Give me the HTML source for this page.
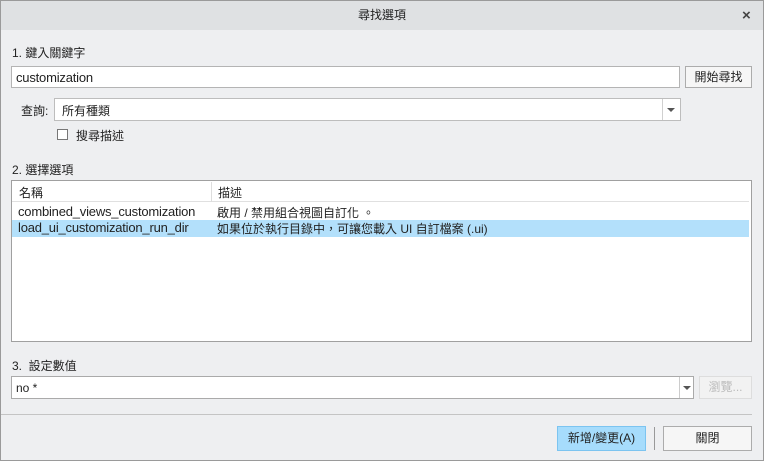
<!DOCTYPE html>
<html><head><meta charset="utf-8"><style>
*{box-sizing:border-box;margin:0;padding:0}
body{width:764px;height:461px;overflow:hidden;background:#eeeff1;font-family:"Liberation Sans","Noto Sans CJK TC",sans-serif;font-size:12px;color:#222;position:relative}
.a{position:absolute}
.win{left:0;top:0;width:764px;height:461px;border:1px solid #9a9a9a}
.title{left:1px;top:1px;width:762px;height:29px;background:#dfe1e3;text-align:center;line-height:29px;font-size:12px}
.inp{background:#fff;border:1px solid #b4b4b4}
.btn{background:#f6f6f6;border:1px solid #acacac;text-align:center;font-size:12px}
.arrow{width:0;height:0;border-left:4px solid transparent;border-right:4px solid transparent;border-top:4px solid #555}
.lat{font-size:13px;letter-spacing:-0.2px}
</style></head><body>
<div class="a win"></div>
<div class="a title">尋找選項</div>
<div class="a" style="left:742px;top:7px;font-size:15px;font-weight:bold;color:#444">×</div>
<div class="a" style="left:12px;top:44px">1. 鍵入關鍵字</div>
<div class="a inp lat" style="left:11px;top:66px;width:669px;height:22px;padding:3px 4px">customization</div>
<div class="a btn" style="left:685px;top:66px;width:67px;height:22px;line-height:20px">開始尋找</div>
<div class="a" style="left:21px;top:102px">查詢:</div>
<div class="a inp" style="left:54px;top:98px;width:627px;height:23px;padding:3px 7px;font-size:12px;border-color:#bdbdbd">所有種類</div>
<div class="a" style="left:662px;top:99px;width:1px;height:21px;background:#d0d0d0"></div>
<div class="a arrow" style="left:667px;top:108px"></div>
<div class="a" style="left:57px;top:129px;width:11px;height:11px;border:1px solid #777;background:#fff"></div>
<div class="a" style="left:76px;top:127px">搜尋描述</div>
<div class="a" style="left:12px;top:161px">2. 選擇選項</div>
<div class="a inp" style="left:11px;top:180px;width:741px;height:162px;border-color:#a0a0a0"></div>
<div class="a" style="left:12px;top:181px;width:737px;height:21px;border-bottom:1px solid #e0e0e0;background:#fff"></div>
<div class="a" style="left:211px;top:182px;width:1px;height:20px;background:#ddd"></div>
<div class="a" style="left:19px;top:184px">名稱</div>
<div class="a" style="left:218px;top:184px">描述</div>
<div class="a lat" style="left:18px;top:204px">combined_views_customization</div>
<div class="a" style="left:217px;top:204px">啟用 / 禁用組合視圖自訂化 。</div>
<div class="a" style="left:12px;top:220px;width:737px;height:17px;background:#b3e0fb"></div>
<div class="a lat" style="left:18px;top:220px">load_ui_customization_run_dir</div>
<div class="a" style="left:217px;top:220px">如果位於執行目錄中，可讓您載入 UI 自訂檔案 (.ui)</div>
<div class="a" style="left:12px;top:357px">3.&nbsp; 設定數值</div>
<div class="a inp" style="left:11px;top:376px;width:683px;height:23px;padding:4px 4px;font-size:12px;border-color:#aaa">no *</div>
<div class="a" style="left:679px;top:377px;width:1px;height:21px;background:#ccc"></div>
<div class="a arrow" style="left:683px;top:386px"></div>
<div class="a btn" style="left:699px;top:376px;width:53px;height:23px;line-height:21px;color:#bbb;border-color:#ddd;background:#f2f2f2">瀏覽...</div>
<div class="a" style="left:1px;top:414px;width:751px;height:1px;background:#c4c4c4"></div>
<div class="a btn" style="left:557px;top:426px;width:89px;height:25px;line-height:23px;background:#a6dcfc;border-color:#7cc4f0">新增/變更(A)</div>
<div class="a" style="left:654px;top:427px;width:1px;height:23px;background:#999"></div>
<div class="a btn" style="left:663px;top:426px;width:89px;height:25px;line-height:23px">關閉</div>
</body></html>
